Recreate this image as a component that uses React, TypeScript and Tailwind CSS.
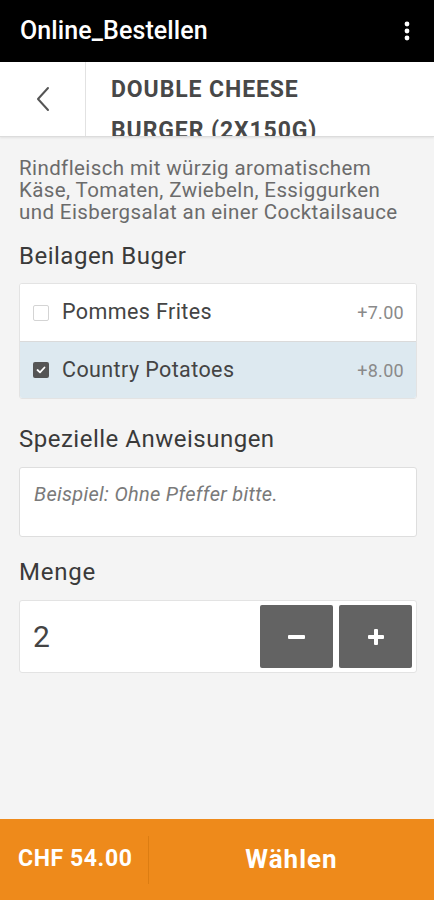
import { useState } from 'react'

export default function App() {
  const [qty, setQty] = useState(2)
  const [picked, setPicked] = useState<Record<string, boolean>>({ fries: false, potatoes: true })

  const options = [
    { id: 'fries', label: 'Pommes Frites', price: '+7.00' },
    { id: 'potatoes', label: 'Country Potatoes', price: '+8.00' },
  ]

  return (
    <div className="w-[434px] h-[900px] bg-[#f4f4f4] flex flex-col overflow-hidden font-['Roboto',sans-serif]">
      {/* app bar */}
      <div className="h-[62px] bg-black flex items-center justify-between pl-[20px] pr-[20px] shrink-0">
        <span className="text-white text-[25px] font-medium tracking-[0.1px]">Online_Bestellen</span>
        <svg width="6" height="20" viewBox="0 0 6 20" className="mr-[4px]">
          <circle cx="3" cy="3" r="2.4" fill="#fff" />
          <circle cx="3" cy="10" r="2.4" fill="#fff" />
          <circle cx="3" cy="17" r="2.4" fill="#fff" />
        </svg>
      </div>

      {/* item header */}
      <div className="h-[75px] bg-white flex shrink-0 border-b border-[#dcdcdc] shadow-[0_1px_2px_rgba(0,0,0,0.08)]">
        <div className="w-[86px] flex items-center justify-center border-r border-[#e2e2e2] shrink-0">
          <svg width="16" height="26" viewBox="0 0 16 26" fill="none">
            <path d="M13 2 L3 13 L13 24" stroke="#555" strokeWidth="2" strokeLinecap="round" strokeLinejoin="round" />
          </svg>
        </div>
        <div className="flex-1 overflow-hidden pl-[25px] pt-[7px]">
          <div className="text-[23px] leading-[41px] font-bold text-[#484848] tracking-[0.9px]">
            DOUBLE CHEESE<br />BURGER (2X150G)
          </div>
        </div>
      </div>

      <div className="flex-1 pl-[19px] pr-[17px]">
        <p className="mt-[20px] text-[20.5px] leading-[22px] tracking-[0.4px] text-[#6b6b6b]">
          Rindfleisch mit würzig aromatischem Käse, Tomaten, Zwiebeln, Essiggurken und Eisbergsalat an einer Cocktailsauce
        </p>

        <div className="mt-[15px] text-[24px] tracking-[0.5px] text-[#3a3a3a]">Beilagen Buger</div>

        <div className="mt-[9px] rounded-[3px] border border-[#e3e3e3] overflow-hidden bg-white">
          {options.map((o, i) => (
            <div
              key={o.id}
              onClick={() => setPicked({ ...picked, [o.id]: !picked[o.id] })}
              className={`h-[57px] flex items-center pl-[13px] pr-[12px] ${i > 0 ? 'border-t border-[#dadada]' : ''} ${picked[o.id] ? 'bg-[#dde9f0]' : 'bg-white'}`}
            >
              {picked[o.id] ? (
                <span className="w-[16px] h-[16px] rounded-[2px] bg-[#555] flex items-center justify-center">
                  <svg width="10" height="8" viewBox="0 0 10 8" fill="none">
                    <path d="M1.5 4 L4 6.3 L8.5 1.5" stroke="#fff" strokeWidth="1.8" strokeLinecap="round" strokeLinejoin="round" />
                  </svg>
                </span>
              ) : (
                <span className="w-[16px] h-[16px] rounded-[2px] border border-[#d4d4d4] bg-white" />
              )}
              <span className="ml-[13px] text-[21.5px] tracking-[0.4px] text-[#444]">{o.label}</span>
              <span className="ml-auto text-[18px] tracking-[0.3px] text-[#8a8a8a]">{o.price}</span>
            </div>
          ))}
        </div>

        <div className="mt-[22px] text-[24px] tracking-[0.5px] text-[#3a3a3a]">Spezielle Anweisungen</div>

        <div className="mt-[10px] h-[70px] rounded-[3px] border border-[#dedede] bg-white px-[14px] pt-[11px]">
          <span className="italic text-[20px] tracking-[0.3px] text-[#7a7a7a]">Beispiel: Ohne Pfeffer bitte.</span>
        </div>

        <div className="mt-[17px] text-[24px] tracking-[0.8px] text-[#3a3a3a]">Menge</div>

        <div className="mt-[10px] h-[73px] rounded-[3px] border border-[#e3e3e3] bg-white flex items-center pl-[13px] pr-[4px]">
          <span className="text-[30px] text-[#444] flex-1">{qty}</span>
          <div className="flex gap-[6px]">
            <button
              onClick={() => setQty(Math.max(1, qty - 1))}
              className="w-[73px] h-[63px] rounded-[2px] bg-[#636363] flex items-center justify-center"
            >
              <span className="block w-[17px] h-[4px] bg-white rounded-[1px]" />
            </button>
            <button
              onClick={() => setQty(qty + 1)}
              className="w-[73px] h-[63px] rounded-[2px] bg-[#636363] flex items-center justify-center"
            >
              <svg width="18" height="18" viewBox="0 0 18 18">
                <rect x="7" y="1" width="4" height="16" rx="1" fill="#fff" />
                <rect x="1" y="7" width="16" height="4" rx="1" fill="#fff" />
              </svg>
            </button>
          </div>
        </div>
      </div>

      {/* footer */}
      <div className="h-[81px] bg-[#ee8a1b] flex items-center shrink-0">
        <div className="w-[149px] h-[48px] flex items-center pl-[18px] border-r border-[#dc7d12]">
          <span className="text-white text-[23px] font-bold tracking-[0.6px]">CHF 54.00</span>
        </div>
        <div className="flex-1 flex items-center justify-center">
          <span className="text-white text-[26px] font-bold tracking-[1px]">Wählen</span>
        </div>
      </div>
    </div>
  )
}
